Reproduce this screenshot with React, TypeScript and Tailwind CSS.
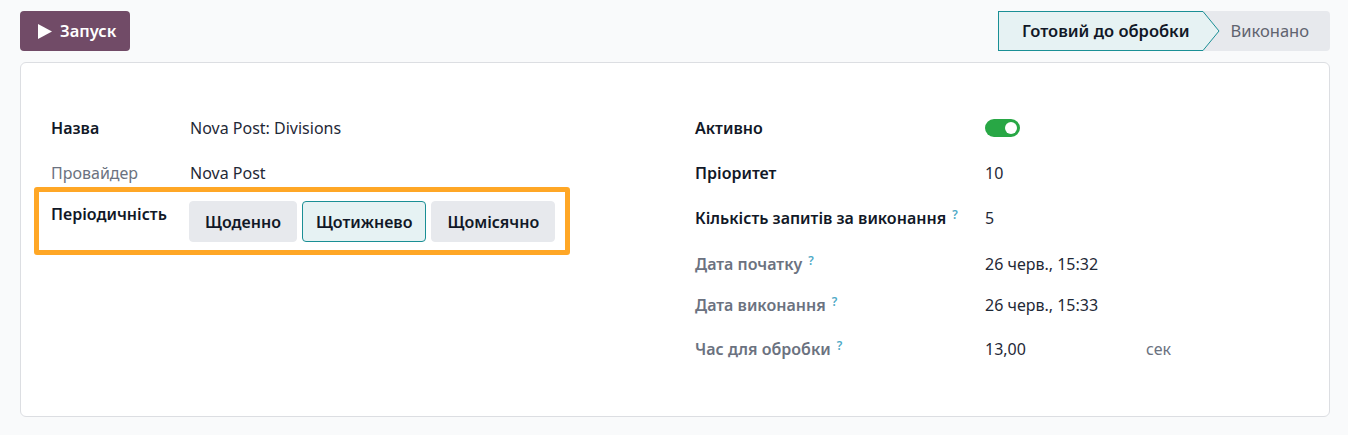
const Hint = () => (
  <sup className="relative -top-[5px] ml-[6px] text-[12px] font-semibold text-[#4ea9c6]">?</sup>
);

const StatusBar = () => {
  return (
    <div className="flex h-10 items-stretch rounded-r bg-[#e7e9ed]">
      <div className="relative flex items-center border border-r-0 border-[#1a8f95] bg-[#e6f2f3] pl-[23px] pr-[12px] text-[16.5px] font-semibold text-[#111827]">
        Готовий до обробки
        <svg
          className="absolute left-full -top-px h-10 w-[18px]"
          viewBox="0 0 18 40"
          preserveAspectRatio="none"
        >
          <polygon points="0,0.5 1,0.5 17,20 1,39.5 0,39.5" fill="#e6f2f3" />
          <polyline points="0,0.5 1,0.5 17,20 1,39.5 0,39.5" fill="none" stroke="#1a8f95" strokeWidth="1" />
        </svg>
      </div>
      <div className="flex items-center pl-[29px] pr-[21px] text-[16.5px] text-[#5f636f]">Виконано</div>
    </div>
  );
};

const ChoiceButton = ({ label, active }: { label: string; active?: boolean }) => (
  <button
    className={
      active
        ? "h-[41px] rounded border border-[#1a8f95] bg-[#e6f2f3] px-[13px] font-semibold text-[#111827]"
        : "h-[41px] rounded border border-[#e7e9ed] bg-[#e7e9ed] px-[15px] font-semibold text-[#111827]"
    }
  >
    {label}
  </button>
);

const App = () => {
  return (
    <div
      className="min-h-[435px] w-[1348px] bg-[#f9fafb] pt-[11px] pl-5 text-[16px] text-[#1f2937]"
      style={{ fontFamily: '"Noto Sans", "Open Sans", sans-serif' }}
    >
      <div className="flex w-[1310px] items-start justify-between">
        <button className="flex h-10 w-[110px] items-center gap-[8px] rounded bg-[#714b67] pl-[18px] text-[16.5px] font-semibold text-white">
          <svg className="h-[15px] w-[14px]" viewBox="0 0 14 15">
            <polygon points="0,0 14,7.5 0,15" fill="white" />
          </svg>
          Запуск
        </button>
        <StatusBar />
      </div>

      <div className="mt-[11px] flex h-[355px] w-[1310px] rounded-md border border-[#dcdee2] bg-white pt-[42px] pl-[30px]">
        {/* left column */}
        <div className="flex w-[644px] flex-col">
          <div className="flex h-[45px] items-center">
            <div className="w-[139px] font-semibold text-[#111827]">Назва</div>
            <div className="text-[#1f2937]">Nova Post: Divisions</div>
          </div>
          <div className="flex h-[45px] items-center">
            <div className="w-[139px] text-[#6b7280]">Провайдер</div>
            <div className="text-[#1f2937]">Nova Post</div>
          </div>
          <div className="relative flex items-start pt-[6px]">
            <div className="w-[138px] pt-px leading-6 font-semibold text-[#111827]">Періодичність</div>
            <div className="flex gap-[5px]">
              <ChoiceButton label="Щоденно" />
              <ChoiceButton label="Щотижнево" active />
              <ChoiceButton label="Щомісячно" />
            </div>
            <span className="pointer-events-none absolute -top-[8px] -left-[17px] h-[68px] w-[536px] rounded-[3px] border-[5px] border-[#ffa726]" />
          </div>
        </div>

        {/* right column */}
        <div className="flex flex-col">
          <div className="flex h-[45px] items-center">
            <div className="w-[290px] font-semibold text-[#111827]">Активно</div>
            <span className="flex h-[18px] w-[35px] items-center justify-end rounded-full bg-[#28a745] pr-[3px]">
              <span className="h-[12px] w-[12px] rounded-full bg-white" />
            </span>
          </div>
          <div className="flex h-[45px] items-center">
            <div className="w-[290px] font-semibold text-[#111827]">Пріоритет</div>
            <div>10</div>
          </div>
          <div className="flex h-[45px] items-center">
            <div className="w-[290px] font-semibold text-[#111827]">
              Кількість запитів за виконання
              <Hint />
            </div>
            <div>5</div>
          </div>
          <div className="flex h-[47px] items-center">
            <div className="w-[290px] font-semibold text-[#6b7280]">
              Дата початку
              <Hint />
            </div>
            <div>26 черв., 15:32</div>
          </div>
          <div className="flex h-[36px] items-center">
            <div className="w-[290px] font-semibold text-[#6b7280]">
              Дата виконання
              <Hint />
            </div>
            <div>26 черв., 15:33</div>
          </div>
          <div className="flex h-[52px] items-center">
            <div className="w-[290px] font-semibold text-[#6b7280]">
              Час для обробки
              <Hint />
            </div>
            <div className="w-[161px]">13,00</div>
            <div className="text-[#6b7280]">сек</div>
          </div>
        </div>
      </div>
    </div>
  );
};

export default App;
